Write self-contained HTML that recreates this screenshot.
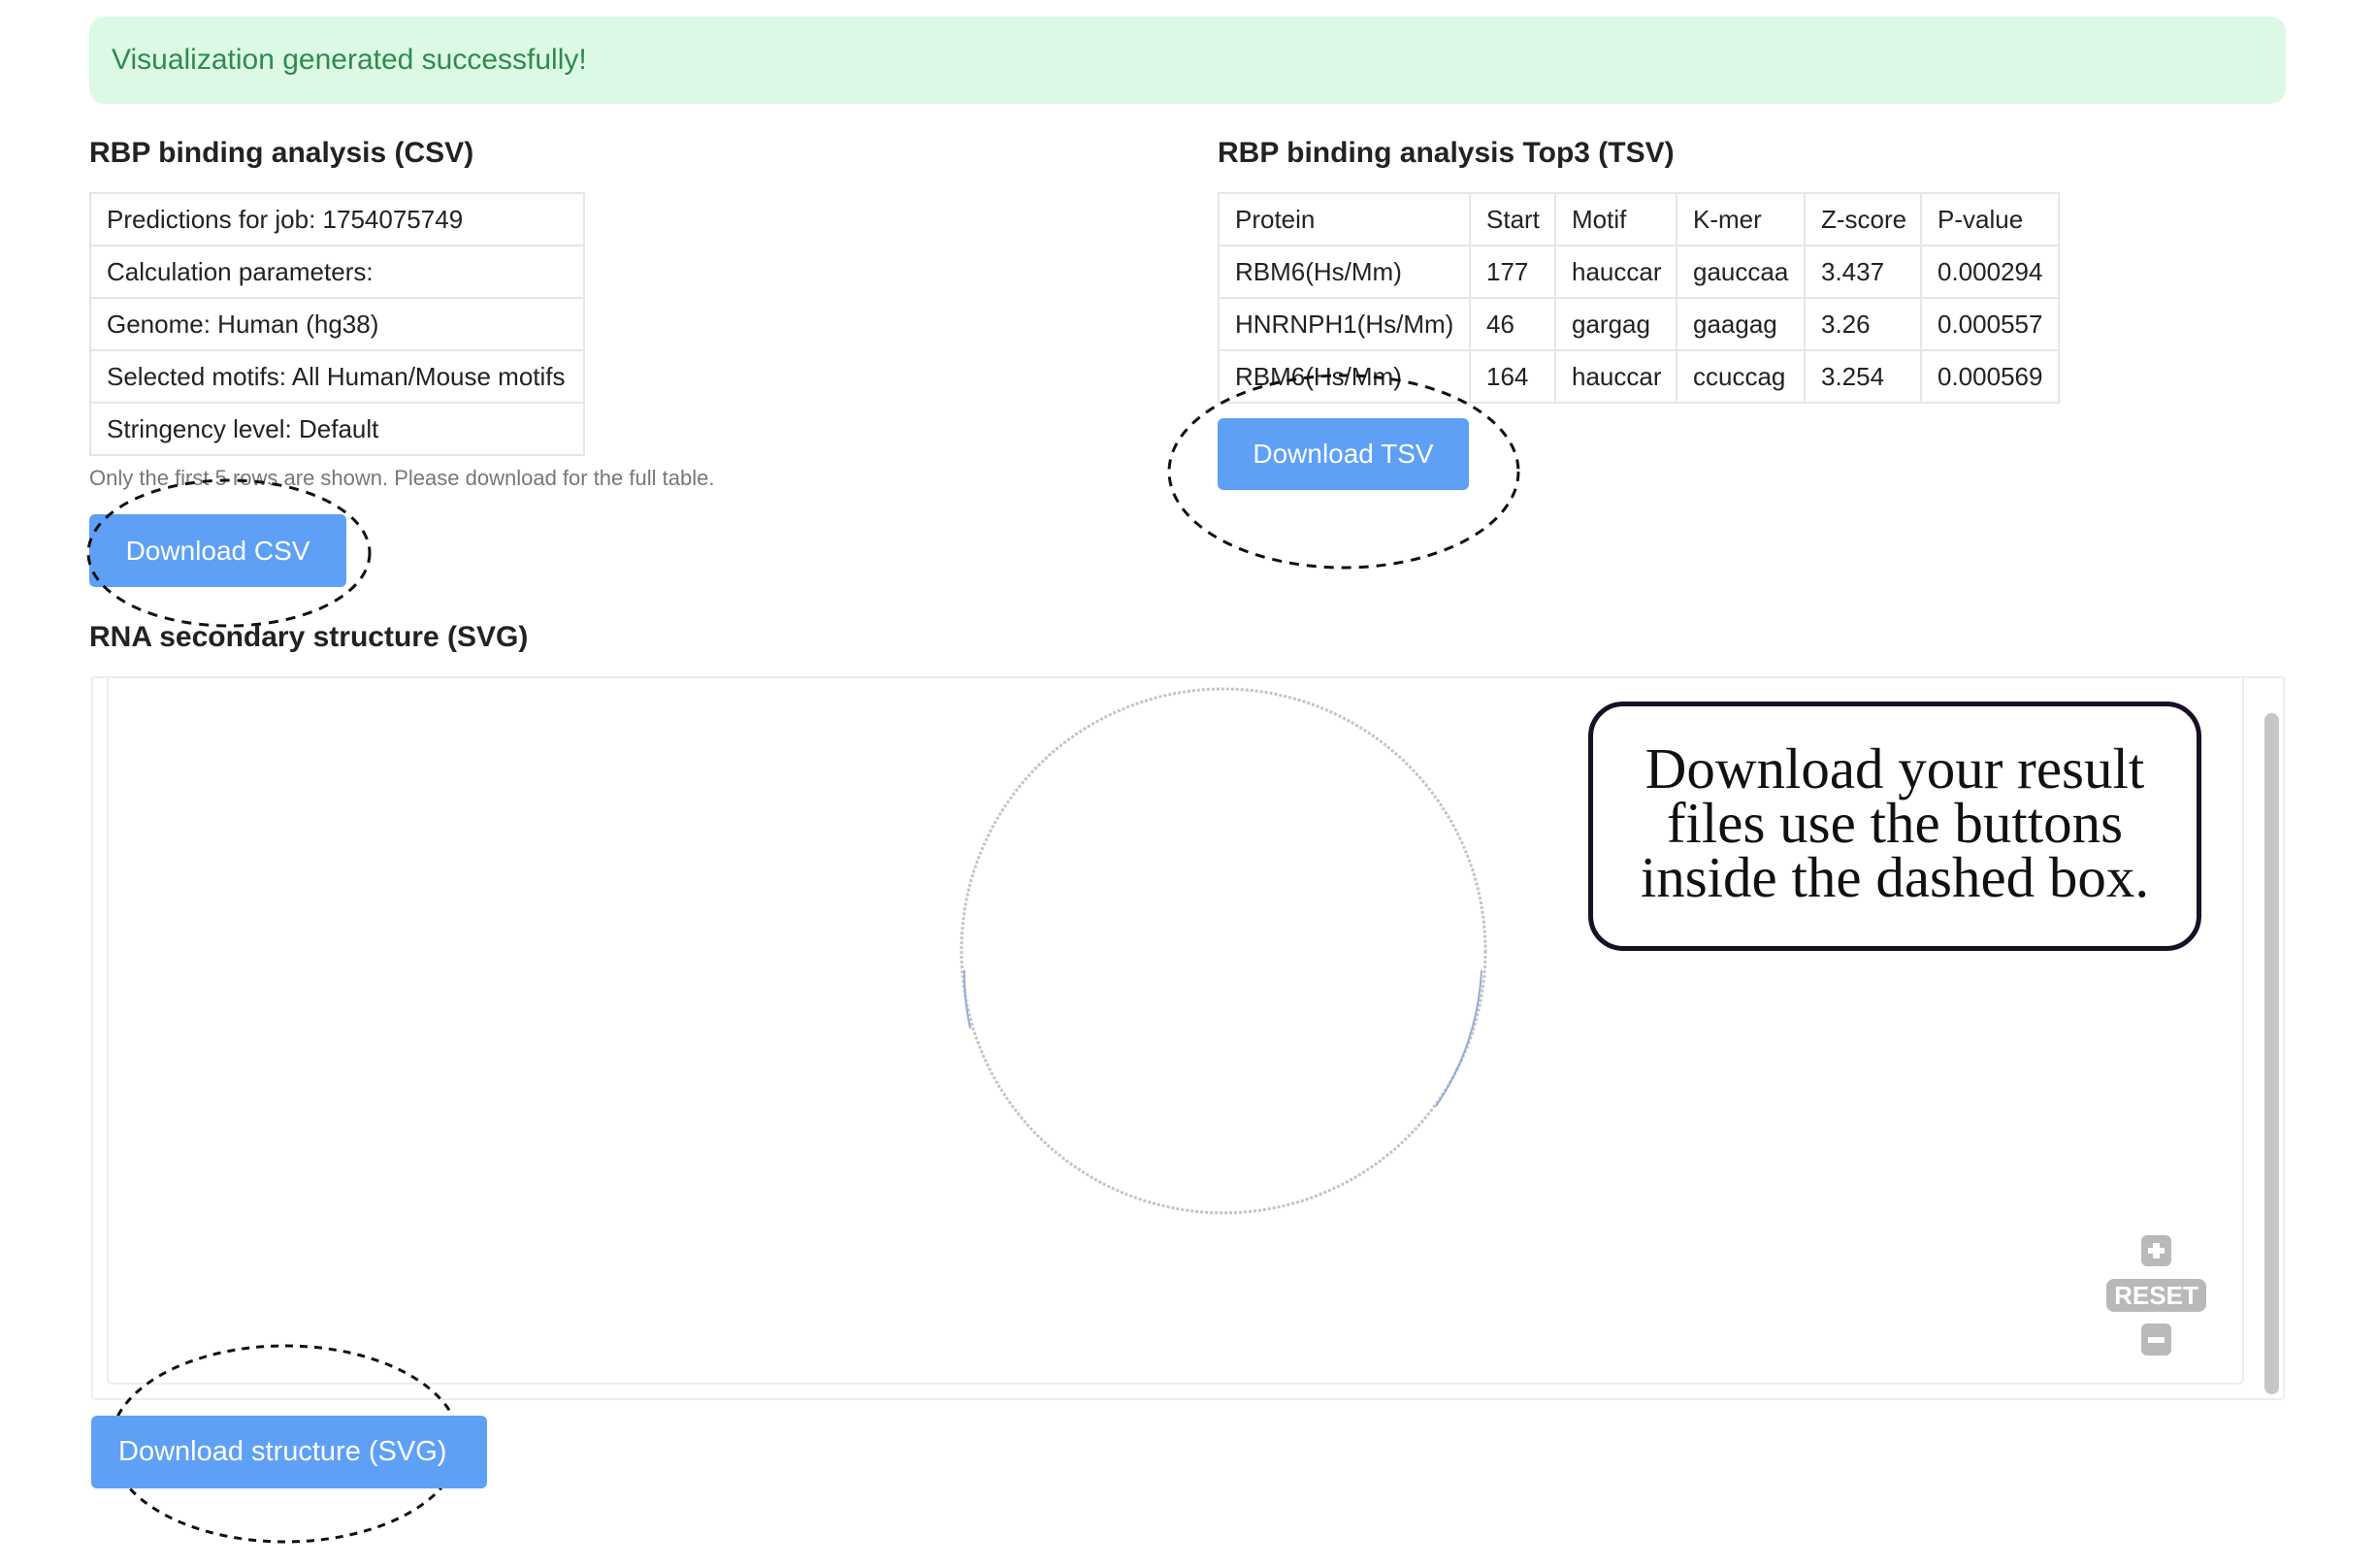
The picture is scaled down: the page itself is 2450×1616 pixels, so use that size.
<!DOCTYPE html>
<html><head><meta charset="utf-8"><style>
*{margin:0;padding:0;box-sizing:border-box}
body{width:2450px;height:1616px;background:#fff;position:relative;overflow:hidden;font-family:"Liberation Sans",Arial,sans-serif;color:#222}
.abs{position:absolute}
.banner{left:92px;top:17px;width:2264px;height:90px;background:#dcf9e6;border-radius:16px;color:#2e8a4e;font-size:30px;line-height:90px;padding-left:23px}
h2{position:absolute;font-size:30px;font-weight:bold;color:#222;line-height:36px}
table{position:absolute;border-collapse:collapse;font-size:26px;color:#222}
td{border:2px solid #e6e6e6;height:54px;padding:0 0 0 16px;white-space:nowrap;vertical-align:middle}
.btn{position:absolute;background:#5ea0f5;color:#fff;font-size:29px;border-radius:6px;text-align:center}
.note{left:92px;top:478px;font-size:22px;color:#777;line-height:30px}
</style></head><body>
<div class="abs banner">Visualization generated successfully!</div>

<h2 style="left:92px;top:140px">RBP binding analysis (CSV)</h2>
<table style="left:92px;top:198px;width:511px">
<tr><td>Predictions for job: 1754075749</td></tr>
<tr><td>Calculation parameters:</td></tr>
<tr><td>Genome: Human (hg38)</td></tr>
<tr><td>Selected motifs: All Human/Mouse motifs</td></tr>
<tr><td>Stringency level: Default</td></tr>
</table>
<div class="abs note">Only the first 5 rows are shown. Please download for the full table.</div>
<div class="btn" style="left:92px;top:530px;width:265px;height:75px;line-height:75px;font-size:28px">Download CSV</div>

<h2 style="left:1255px;top:140px">RBP binding analysis Top3 (TSV)</h2>
<table style="left:1255px;top:198px">
<colgroup><col style="width:259px"><col style="width:88px"><col style="width:125px"><col style="width:132px"><col style="width:120px"><col style="width:142px"></colgroup>
<tr><td>Protein</td><td>Start</td><td>Motif</td><td>K-mer</td><td>Z-score</td><td>P-value</td></tr>
<tr><td>RBM6(Hs/Mm)</td><td>177</td><td>hauccar</td><td>gauccaa</td><td>3.437</td><td>0.000294</td></tr>
<tr><td>HNRNPH1(Hs/Mm)</td><td>46</td><td>gargag</td><td>gaagag</td><td>3.26</td><td>0.000557</td></tr>
<tr><td>RBM6(Hs/Mm)</td><td>164</td><td>hauccar</td><td>ccuccag</td><td>3.254</td><td>0.000569</td></tr>
</table>
<div class="btn" style="left:1255px;top:431px;width:259px;height:74px;line-height:74px;font-size:28px">Download TSV</div>

<h2 style="left:92px;top:639px">RNA secondary structure (SVG)</h2>
<div class="abs" style="left:94px;top:697px;width:2261px;height:746px;border:2px solid #eee;border-radius:4px"></div>
<div class="abs" style="left:110px;top:697px;width:2203px;height:730px;border:2px solid #eee;border-top:none;border-radius:0 0 6px 6px"></div>
<div class="abs" style="left:2334px;top:735px;width:15px;height:702px;background:#c6c6c6;border-radius:8px"></div>

<svg class="abs" style="left:0;top:0" width="2450" height="1616">
<circle cx="1261" cy="980" r="270" fill="none" stroke="#c4c4c4" stroke-width="3" stroke-dasharray="3 2"/>
<path d="M994 1000 A270 270 0 0 0 1000 1060" fill="none" stroke="#8fb0d8" stroke-width="2"/>
<path d="M1527 1000 A270 270 0 0 1 1480 1140" fill="none" stroke="#8fb0d8" stroke-width="2"/>
<ellipse cx="236" cy="570" rx="145" ry="75" fill="none" stroke="#111" stroke-width="3" stroke-dasharray="10 8"/>
<ellipse cx="1385" cy="486" rx="180" ry="99" fill="none" stroke="#111" stroke-width="3" stroke-dasharray="10 8"/>
<ellipse cx="294" cy="1488" rx="180" ry="101" fill="none" stroke="#111" stroke-width="3" stroke-dasharray="8 7"/>
</svg>

<div class="abs" style="left:1637px;top:723px;width:632px;height:257px;border:5px solid #1a1025;border-radius:36px;background:#fff;font-family:'Liberation Serif',serif;font-size:59px;line-height:56px;text-align:center;padding-top:36px;color:#111">Download your result<br>files use the buttons<br>inside the dashed box.</div>

<div class="abs" style="left:2207px;top:1273px;width:31px;height:32px;background:#b9b9b9;border-radius:6px"></div>
<div class="abs" style="left:2214px;top:1286px;width:17px;height:6px;background:#fff"></div>
<div class="abs" style="left:2219px;top:1281px;width:7px;height:16px;background:#fff"></div>
<div class="abs" style="left:2171px;top:1318px;width:103px;height:34px;background:#b9b9b9;border-radius:8px;color:#fff;font-weight:bold;font-size:26px;line-height:34px;text-align:center">RESET</div>
<div class="abs" style="left:2207px;top:1364px;width:31px;height:33px;background:#b9b9b9;border-radius:6px"></div>
<div class="abs" style="left:2214px;top:1378px;width:17px;height:6px;background:#fff"></div>

<div class="btn" style="left:94px;top:1459px;width:408px;height:75px;line-height:75px;font-size:29px;text-align:left;padding-left:28px">Download structure (SVG)</div>
</body></html>
